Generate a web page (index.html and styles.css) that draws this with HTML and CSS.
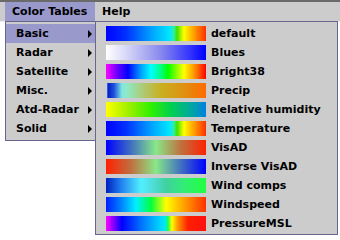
FILE: index.html
```html
<!DOCTYPE html>
<html>
<head>
<meta charset="utf-8">
<link rel="stylesheet" href="styles.css">
</head>
<body>
<div class="menubar">
  <div class="menu-title active">Color Tables</div>
  <div class="menu-title">Help</div>
</div>
<div class="menu cat-menu">
  <div class="item sel"><span>Basic</span><i class="arrow"></i></div>
  <div class="item"><span>Radar</span><i class="arrow"></i></div>
  <div class="item"><span>Satellite</span><i class="arrow"></i></div>
  <div class="item"><span>Misc.</span><i class="arrow"></i></div>
  <div class="item"><span>Atd-Radar</span><i class="arrow"></i></div>
  <div class="item"><span>Solid</span><i class="arrow"></i></div>
</div>
<div class="menu table-menu">
  <div class="row"><div class="swatch g-default"></div><span>default</span></div>
  <div class="row"><div class="swatch g-blues"></div><span>Blues</span></div>
  <div class="row"><div class="swatch g-bright"></div><span>Bright38</span></div>
  <div class="row"><div class="swatch g-precip"></div><span>Precip</span></div>
  <div class="row"><div class="swatch g-rh"></div><span>Relative humidity</span></div>
  <div class="row"><div class="swatch g-temp"></div><span>Temperature</span></div>
  <div class="row"><div class="swatch g-visad"></div><span>VisAD</span></div>
  <div class="row"><div class="swatch g-invvisad"></div><span>Inverse VisAD</span></div>
  <div class="row"><div class="swatch g-wind"></div><span>Wind comps</span></div>
  <div class="row"><div class="swatch g-windspeed"></div><span>Windspeed</span></div>
  <div class="row"><div class="swatch g-pmsl"></div><span>PressureMSL</span></div>
</div>
</body>
</html>
```
FILE: styles.css
```css
html, body {
  margin: 0;
  padding: 0;
  background: #ffffff;
  width: 340px;
  height: 240px;
  overflow: hidden;
  font-family: "DejaVu Sans", sans-serif;
  font-weight: bold;
  font-size: 11px;
  color: #000;
}
.menubar {
  display: flex;
  height: 19px;
  border-top: 2px solid #6a6a6a;
  border-bottom: 1px solid #eeeeee;
  background: #cccccc;
  padding-left: 5px;
}
.menu-title {
  height: 19px;
  line-height: 19px;
  padding: 0 7px;
  font-size: 11px;
}
.menu-title.active {
  background: #9999cc;
  width: 76px;
}
.menu {
  position: absolute;
  top: 21px;
  background: #cccccc;
  border: 1px solid #66668f;
  box-sizing: border-box;
}
.cat-menu {
  left: 5px;
  width: 91px;
  padding: 2px 0 2px 0;
}
.item {
  display: flex;
  align-items: center;
  justify-content: space-between;
  height: 19px;
  padding: 0 3px 0 10px;
}
.item.sel {
  background: #9999cc;
}
.arrow {
  width: 0;
  height: 0;
  border-top: 4px solid transparent;
  border-bottom: 4px solid transparent;
  border-left: 4px solid #000;
}
.table-menu {
  left: 95px;
  width: 243px;
  height: 214px;
  padding-top: 2px;
}
.row {
  display: flex;
  align-items: center;
  height: 19px;
  padding-left: 10px;
  gap: 5px;
}
.swatch {
  width: 100px;
  height: 15px;
}
.g-default {
  background: linear-gradient(to right, #0000ff 0%, #0030ff 20%, #00a0ff 45%, #00e8ff 64%, #30f0a0 68%, #40e000 71%, #ffff00 78%, #ffb000 86%, #ff3000 100%);
}
.g-temp {
  background: linear-gradient(to right, #0000ff 0%, #0030ff 20%, #00a0ff 45%, #00e8ff 64%, #30f0a0 68%, #40e000 71%, #ffff00 78%, #ffb000 86%, #ff3000 100%);
}
.g-blues {
  background: linear-gradient(to right, #ffffff 0%, #d8d8f8 20%, #8888ee 55%, #3030ff 85%, #0000ff 100%);
}
.g-bright {
  background: linear-gradient(to right, #ff00ff 0%, #6000ff 12%, #0000ff 22%, #00a0ff 35%, #00ffff 45%, #00ff80 55%, #00ff00 62%, #ffff00 78%, #ff8000 90%, #ff0000 100%);
}
.g-precip {
  background: linear-gradient(to right, #ffffff 0%, #0020c0 2%, #2050e0 8%, #80e8e0 16%, #90e8c0 22%, #b0c870 38%, #c8b020 55%, #e09010 78%, #ff6a00 100%);
}
.g-rh {
  background: linear-gradient(to right, #ffff00 0%, #a0f000 22%, #30f000 45%, #00d050 65%, #00a8a0 85%, #0080e0 100%);
}
.g-visad {
  background: linear-gradient(to right, #0000ff 0%, #4070c0 25%, #88e888 50%, #c07040 75%, #ff2000 100%);
}
.g-invvisad {
  background: linear-gradient(to right, #ff2000 0%, #c07040 25%, #88e888 50%, #4070c0 75%, #0000ff 100%);
}
.g-wind {
  background: linear-gradient(to right, #0020c0 0%, #2080f0 15%, #50f0ff 35%, #50e0e0 45%, #40d0a0 60%, #30f070 80%, #20ff40 100%);
}
.g-windspeed {
  background: linear-gradient(to right, #0020ff 0%, #0080ff 15%, #00f0ff 30%, #00ff40 45%, #ffff00 60%, #ffa000 78%, #ff3000 100%);
}
.g-pmsl {
  background: linear-gradient(to right, #ff00ff 0%, #8000ff 8%, #0000ff 16%, #0070ff 35%, #00d8ff 55%, #00f0e0 60%, #20ff40 62%, #ffff00 66%, #ff9000 72%, #ff2000 82%, #ff1010 100%);
}
```
